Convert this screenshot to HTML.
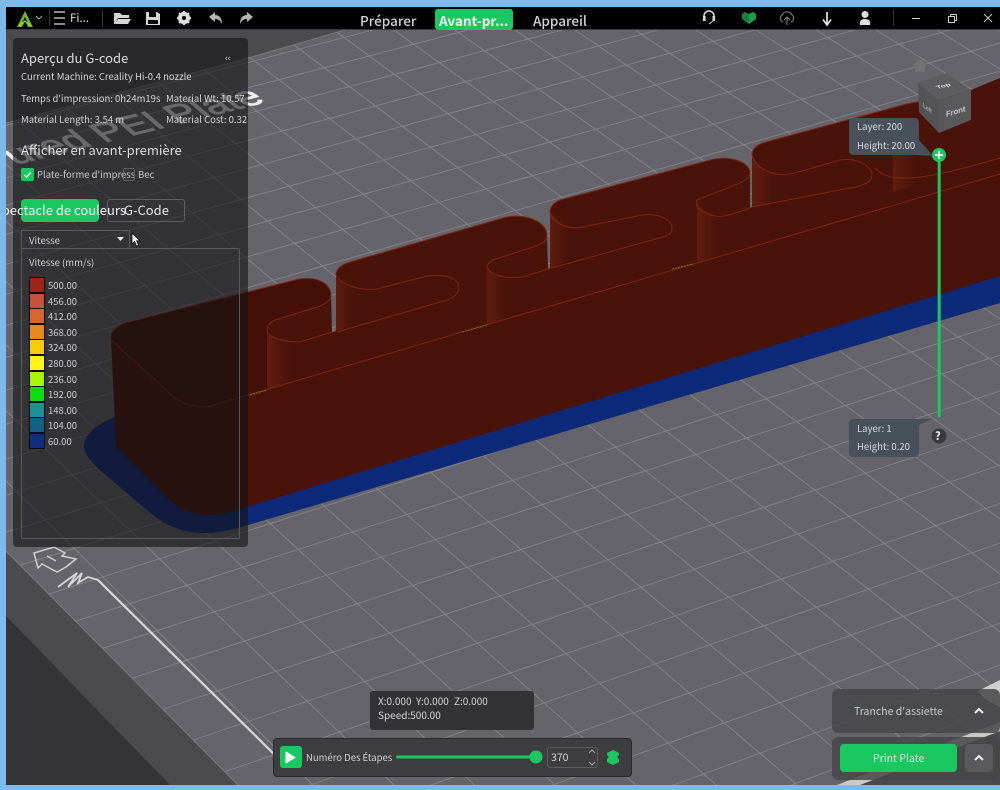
<!DOCTYPE html>
<html><head><meta charset="utf-8"><style>
html,body{margin:0;padding:0;background:#7cb9ec;width:1000px;height:790px;overflow:hidden}
#w{position:relative;width:1000px;height:790px;overflow:hidden;background:#7cb9ec;font-family:"Noto Sans CJK SC","Liberation Sans",sans-serif;font-size:9.5px;color:#d4d4d4}
#scene{position:absolute;left:0;top:0}
.t{position:absolute;white-space:nowrap;line-height:14px}
.a{position:absolute;box-sizing:border-box}
.sw{position:absolute;left:29px;width:16px;height:16px;border:1px solid #0c0c0c;box-sizing:border-box}
.n{position:absolute;left:48px;white-space:nowrap;line-height:14px;color:#cfcfcf}
</style></head><body><div id="w">
<svg id="scene" width="1000" height="790" viewBox="0 0 1000 790">
<defs><clipPath id="v"><rect x="6" y="30" width="994" height="755"/></clipPath>
<clipPath id="pl"><polygon points="6,123 248,58 345,30 1000,30 1000,725 837,785 238,785 6,551"/></clipPath>
<linearGradient id="g"><stop offset="0" stop-color="#601d0f"/><stop offset="1" stop-color="#601d0f" stop-opacity="0"/></linearGradient></defs>
<g clip-path="url(#v)">
<rect x="0" y="30" width="1000" height="760" fill="#65646a"/>
<polygon points="0,30 345,30 248,58 0,125" fill="#4b4a4e"/>
<polygon points="0,545 6,551 238,785 0,785" fill="#4b4a4e"/>
<polygon points="0,612 7,617 170,785 0,785" fill="#343335"/>
<polygon points="837,785 1000,725 1000,785 837,785" fill="#4b4a4e"/>
<g clip-path="url(#pl)" stroke="#858589" stroke-width=".9" fill="none">
<path d="M0,32L8,30M0,55L100,30M0,78.5L191,30M0,102L280,30M0,127L373,30M0,153L468,30M0,179.5L562,30M0,207L658,30M0,236L755,30M0,266L855,30M0,296L950,30M0,327L1000,43M0,359L1000,71M0,392L1000,100M0,426L1000,130M0,461L1000,161M0,497L1000,192M0,534L1000,225M0,571.5L1000,261M0,609.5L1000,291.5M0,645.5L1000,323.5M0,682L1000,355M0,722L1000,391M0,764L1000,428M47,790L1000,465M172,790L1000,503.5M296,790L1000,543M417,790L1000,582M539,790L1000,623M660,790L1000,665M778,790L1000,707M897,790L1000,751"/>
<path d="M0,548L237.6,790M0,475L318,790M0,405L399,790M0,339L480,790M0,276L560.7,790M0,216L641.5,790M0,159L722,790M0,105L803,790M0,52.5L884,790M33,30L965,790M93,30L1000,754M153,30L1000,692M214,30L1000,632M274,30L1000,574M334,30L1000,519M394,30L1000,466.5M455,30L1000,415M515,30L1000,366M575,30L1000,319M635,30L1000,274M696,30L1000,230M756,30L1000,187M816,30L1000,147M876,30L1000,107M937,30L1000,69M997,30L1000,32"/>
</g>
<path d="M6,551L238,785" stroke="#7e7e81" stroke-width="1" fill="none"/>
<path d="M6,123L248,58L345,30" stroke="#78787b" stroke-width="1" fill="none"/>
<text transform="matrix(1.5,-.375,1.05,.9,267,102)" text-anchor="end" font-family="Liberation Sans" font-size="26" fill="#ececec" stroke="#ececec" stroke-width=".7">ured PEI Plate</text>
<path d="M34,553L54,547L65,553L62,556L76,559L66,567L57,572L42,564L38,568ZM47,556L56,561" fill="none" stroke="#cfcfcf" stroke-width="1.5"/>
<path d="M58,587L77,573L68,587L82,573L78,583L88,577L98,580" fill="none" stroke="#d5d5d5" stroke-width="1.8"/>
<path d="M98,580L283,763" stroke="#d8d8d8" stroke-width="2.2"/>
<polygon points="837,785 1000,722 1000,731 860,785" fill="#c9c9c9"/>
<polygon points="978,691 1000,680 1000,707 990,702 984,698" fill="#cfcfcf"/>
<path d="M115,417C95,425 84,435 84,447C85,455 92,463 100,470L147,510C165,527 185,533 205,533C225,533 240,527 255,523L1000,303L1000,276L115,417Z" fill="#0d2a7a"/>
<path d="M111,338C111,330 118,326 125,323L295,280C315,275 331,283 331,295L332,332L336,331L336,275C336,268 343,264 350,262L503,218C525,212 547,222 547,235L548,269L550,268L550,212C550,206 555,202 560,200L710,160C730,155 750,162 750,173L750,208L752,207L752,155C752,148 758,144 766,142L903,105C915,102 925,100 935,100L971,90L1000,78L1000,276L247,507C235,511 225,515 207,515C197,515 187,512 177,507L116,447Z" fill="#4a1309"/>
<path d="M111,338C111,330 118,326 125,323L295,280C315,275 331,283 331,295C331,302 322,305 317,307L275,320C270,322 267,326 267,330L267,389L207,407C197,407 185,405 175,398Z" fill="#430f07"/>
<path d="M267,330C270,336 276,340 290,340L290,382L267,389Z" fill="url(#g)"/>
<path d="M336,278C340,282 344,284 350,285L350,327L336,331Z" fill="url(#g)"/>
<path d="M487,267C490,272 495,276 505,277L505,320L487,325Z" fill="url(#g)"/>
<path d="M550,212C555,218 560,222 568,225L568,260L550,268Z" fill="url(#g)"/>
<path d="M697,200C700,208 705,212 718,216L718,257L697,263Z" fill="url(#g)"/>
<path d="M752,155C756,163 762,168 772,172L772,205L752,207Z" fill="url(#g)"/>
<path d="M893,150L915,145L915,186L893,192Z" fill="url(#g)"/>
<g fill="none" stroke="#7f2713" stroke-width="1">
<path d="M111,338C111,330 118,326 125,323L295,280C315,275 331,283 331,295C331,302 322,305 317,307L275,320C270,322 267,326 267,330C267,336 280,342 300,342L332,332"/>
<path d="M336,275C336,268 343,264 350,262L503,218C525,212 547,222 547,235C547,242 540,245 533,247L493,260C489,262 487,264 487,267C490,275 505,279 523,277L548,269"/>
<path d="M336,275C340,283 355,291 377,289L423,277C440,273 459,276 459,288C459,294 453,298 447,300L337,332"/>
<path d="M550,212C552,222 565,230 583,227L637,216C655,212 672,218 672,228C672,233 668,236 663,237L548,269"/>
<path d="M750,173C750,178 745,181 735,185L697,200C694,206 700,212 715,216C725,218 740,211 750,208"/>
<path d="M710,160C730,155 750,162 750,173M550,212C550,206 555,202 560,200L710,160"/>
<path d="M752,155C756,170 775,178 795,173L840,160C860,157 872,168 872,175C872,182 862,186 855,187L752,207"/>
<path d="M752,155C752,148 758,144 766,142L903,105C915,102 925,100 935,100"/>
<path d="M875,168C890,185 925,180 1000,158"/>
<path d="M111,340L175,398C185,405 197,407 207,407L1000,174"/>
</g>
<path d="M250,395L267,390M462,332L487,325M672,269L693,264" stroke="#6e8018" stroke-width="1" stroke-dasharray="2 1"/>
<path d="M920,59L927,65H925V72H915V65H913Z" fill="#737377"/>
<polygon points="918,83 947,73 971,90 939,100" fill="#5d5d60"/>
<polygon points="918,83 939,100 939,133 919,112" fill="#545457"/>
<polygon points="939,100 971,90 971,120 939,133" fill="#59595c"/>
<text transform="matrix(.95,-.25,.5,.5,938,89)" font-family="Liberation Sans" font-weight="bold" font-size="8" fill="#ddd">Top</text>
<text transform="matrix(.75,.6,0,1,923,107)" font-family="Liberation Sans" font-size="7" fill="#bbb">Left</text>
<text transform="matrix(.95,-.28,0,1,946,117)" font-family="Liberation Sans" font-weight="bold" font-size="8" fill="#ccc">Front</text>
<rect x="937.7" y="155" width="3" height="262" fill="#19c860"/>
<polygon points="919,140 933,156 915,155" fill="#48505a"/>
<rect x="849" y="118" width="70" height="37" rx="4" fill="#48505a"/>
<polygon points="919,425 932,419 910,419" fill="#48505a"/>
<rect x="849" y="419" width="70" height="38" rx="4" fill="#48505a"/>
<circle cx="939" cy="155" r="7" fill="#19c860"/>
<path d="M935,155H943M939,151V159" stroke="#fff" stroke-width="1.8"/>
<circle cx="939" cy="436" r="7.5" fill="#3a3a3c"/>
</g>
</svg>
<div class="a" style="left:13px;top:38px;width:235px;height:509px;background:rgba(18,18,20,.6);border-radius:4px"></div>
<div class="t" style="left:21px;top:50px;font-size:13px;line-height:16px;color:#dcdcdc">Aperçu du G-code</div>
<div class="t" style="left:225px;top:51px;font-size:9px;color:#ccc">‹‹</div>
<div class="t" style="left:21px;top:69px">Current Machine: Creality Hi-0.4 nozzle</div>
<div class="t" style="left:21px;top:91px">Temps d'impression: 0h24m19s</div>
<div class="t" style="left:166px;top:91px;width:81px;overflow:hidden">Material Wt: 10.57</div>
<div class="t" style="left:21px;top:112px">Material Length: 3.54 m</div>
<div class="t" style="left:166px;top:112px;width:82px;overflow:hidden">Material Cost: 0.32</div>
<div class="t" style="left:21px;top:142px;font-size:13px;line-height:16px;color:#dcdcdc">Afficher en avant-première</div>
<svg class="a" style="left:21px;top:168px" width="13" height="13"><rect width="13" height="13" rx="2" fill="#19c860"/><path d="M3.5,6.8L5.6,9L9.6,4.5" fill="none" stroke="#fff" stroke-width="1.4"/></svg>
<div class="t" style="left:37px;top:167px;color:#c9c9c9">Plate-forme d'impress</div>
<div class="a" style="left:123px;top:168px;width:12px;height:13px;border:1px solid #5f5f5f;border-radius:2px"></div>
<div class="t" style="left:138px;top:167px;color:#c9c9c9">Bec</div>
<div class="a" style="left:21px;top:199px;width:78px;height:23px;background:#19c860;border-radius:4px"></div>
<div class="a" style="left:107px;top:199px;width:78px;height:23px;border:1px solid #5f5f5f;border-radius:3px"></div>
<div class="a" style="left:6px;top:202px;width:180px;height:16px;overflow:hidden">
<div class="t" style="left:-12px;top:0;font-size:13px;line-height:16px;color:#f2f2f2">Spectacle de couleurs</div>
<div class="t" style="left:118px;top:0;font-size:13px;line-height:16px;color:#e6e6e6">G-Code</div></div>
<div class="a" style="left:21px;top:230px;width:109px;height:19px;border:1px solid #5a5a5a;border-bottom:0"></div>
<div class="t" style="left:29px;top:233px;color:#d0d0d0">Vitesse</div>
<svg class="a" style="left:117px;top:237px" width="7" height="5"><polygon points="0,0 7,0 3.5,4" fill="#eee"/></svg>
<svg class="a" style="left:131px;top:232px" width="11" height="15"><path d="M1,1V12L3.5,9.5L5.5,14L7.5,13L5.6,8.8H9Z" fill="#f4f4f4" stroke="#111" stroke-width=".8"/></svg>
<div class="a" style="left:21px;top:248px;width:219px;height:291px;border:1px solid #5a5a5a;border-radius:2px"></div>
<div class="t" style="left:29px;top:255px;color:#cfcfcf">Vitesse (mm/s)</div>
<div class="sw" style="top:277px;background:#9b2415"></div><div class="n" style="top:278px">500.00</div>
<div class="sw" style="top:293px;background:#c8503c"></div><div class="n" style="top:294px">456.00</div>
<div class="sw" style="top:308px;background:#d6662e"></div><div class="n" style="top:309px">412.00</div>
<div class="sw" style="top:324px;background:#e68a20"></div><div class="n" style="top:325px">368.00</div>
<div class="sw" style="top:339px;background:#f5cc05"></div><div class="n" style="top:340px">324.00</div>
<div class="sw" style="top:355px;background:#fff515"></div><div class="n" style="top:356px">280.00</div>
<div class="sw" style="top:371px;background:#a9f500"></div><div class="n" style="top:372px">236.00</div>
<div class="sw" style="top:386px;background:#0fdc0f"></div><div class="n" style="top:387px">192.00</div>
<div class="sw" style="top:402px;background:#1f8f99"></div><div class="n" style="top:403px">148.00</div>
<div class="sw" style="top:417px;background:#126088"></div><div class="n" style="top:418px">104.00</div>
<div class="sw" style="top:433px;background:#0e2e82"></div><div class="n" style="top:434px">60.00</div>
<div class="a" style="left:6px;top:7px;width:994px;height:23px;background:#000;border-bottom:1px solid #3a3a3c"></div>
<svg class="a" style="left:0;top:0" width="1000" height="32" fill="none">
<path d="M25,11L33,27H28L25,21L22,27H17Z" fill="#6fb52c"/><path d="M25,17L28,23H22Z" fill="#111"/><path d="M19,26L25,21L31,26" stroke="#a6d83a" stroke-width="1.2"/>
<path d="M36,16L39,19L42,16" stroke="#aaa" stroke-width="1"/>
<path d="M49.5,10V26M102.5,10V26M893.5,10V26" stroke="#333"/>
<path d="M54,12H65M54,18H65M54,24H65" stroke="#ddd" stroke-width="1.2"/>
<path d="M114,13H120L122,15H129V18H118L115,24H114Z" fill="#d5d5d5"/><path d="M118,19H131L128,24H115Z" fill="#d5d5d5"/>
<path d="M146,12H157L160,14V25H146Z" fill="#d5d5d5"/><rect x="149" y="12" width="7" height="5" fill="#000"/><rect x="148" y="20" width="10" height="4" fill="#000"/>
<circle cx="184" cy="18" r="4.5" stroke="#ddd" stroke-width="3.2"/><path d="M184,11V25M177,18H191M179,13L189,23M189,13L179,23" stroke="#ddd" stroke-width="2"/><circle cx="184" cy="18" r="2" fill="#000"/>
<path d="M209,17L215,12V15C220,15 222,19 222,24C220,20 218,19 215,19V22Z" fill="#b5b5b5"/>
<path d="M253,17L247,12V15C242,15 240,19 240,24C242,20 244,19 247,19V22Z" fill="#b5b5b5"/>
<path d="M704,19V16A5,5 0 0 1 714,16V19" stroke="#ddd" stroke-width="1.5"/><rect x="703" y="16" width="2.6" height="5" fill="#ddd"/><rect x="712.5" y="16" width="2.6" height="5" fill="#ddd"/><path d="M713,21L709,24" stroke="#ddd"/>
<path d="M742,14L745,12L749,14L753,12L756,14V19L749,24L742,19Z" fill="#15803f"/><path d="M749,14L753,12L756,14V19L749,24Z" fill="#1a9e4e"/>
<path d="M783,22A4,4 0 0 1 782,15A5.500,5.500 0 0 1 792,15A4,4 0 0 1 791,22M787,25V17M784,20L787,17L790,20" stroke="#7d7d7d" stroke-width="1.1"/>
<path d="M827,12V24M823,19.500L827,25L831,19.500" stroke="#ddd" stroke-width="1.8"/>
<circle cx="865" cy="14.500" r="3.500" fill="#ddd"/><path d="M860,25C859,20 862,19 865,19C868,19 871,20 870,25Z" fill="#ddd"/>
<path d="M912,18.500H920" stroke="#ccc"/><rect x="948.500" y="16.500" width="6" height="6" stroke="#ccc"/><path d="M950.500,16.500V14.500H956.500V20.500H954.500" stroke="#ccc"/>
<path d="M984,14L992,22M992,14L984,22" stroke="#ccc"/>
</svg>
<div class="t" style="left:70px;top:11px;font-size:11.5px;color:#ddd">Fi...</div>
<div class="t" style="left:360px;top:12px;font-size:13.5px;line-height:16px;font-weight:500;color:#cfd4da">Préparer</div>
<div class="a" style="left:435px;top:9px;width:78px;height:21px;background:#19c860;border-radius:3px"></div>
<div class="t" style="left:439px;top:12px;font-size:13.5px;line-height:16px;font-weight:700;color:#f4f4f4">Avant-pr...</div>
<div class="t" style="left:533px;top:12px;font-size:13.5px;line-height:16px;font-weight:500;color:#cfd4da">Appareil</div>
<div class="t" style="left:857px;top:119px;color:#d6dadd">Layer: 200</div>
<div class="t" style="left:857px;top:138px;color:#d6dadd">Height: 20.00</div>
<div class="t" style="left:857px;top:421px;color:#d6dadd">Layer: 1</div>
<div class="t" style="left:857px;top:439px;color:#d6dadd">Height: 0.20</div>
<div class="t" style="left:935px;top:429px;font-size:11px;font-weight:700;color:#fff">?</div>
<div class="a" style="left:370px;top:691px;width:164px;height:39px;background:#333335;border-radius:3px"></div>
<div class="t" style="left:378px;top:694px;font-size:10px;color:#d6d6d6">X:0.000</div>
<div class="t" style="left:416px;top:694px;font-size:10px;color:#d6d6d6">Y:0.000</div>
<div class="t" style="left:454px;top:694px;font-size:10px;color:#d6d6d6">Z:0.000</div>
<div class="t" style="left:378px;top:708px;font-size:10px;color:#d6d6d6">Speed:500.00</div>
<div class="a" style="left:273px;top:738px;width:359px;height:39px;background:#3e3e40;border:1px solid #2a2a2b;border-radius:4px"></div>
<div class="a" style="left:280px;top:746px;width:22px;height:22px;background:#19c860;border-radius:3px"></div>
<svg class="a" style="left:273px;top:738px" width="359" height="39" fill="none">
<path d="M13,14L22,19.500L13,25Z" fill="#fff" stroke="#fff" stroke-linejoin="round"/>
<rect x="123" y="17.500" width="140" height="3" rx="1.500" fill="#19c860"/><circle cx="263" cy="19" r="6.500" fill="#19c860"/>
<rect x="274.500" y="9.500" width="50" height="20" rx="3" stroke="#5c5c5e"/>
<path d="M316,15L319,12L322,15" stroke="#aaa"/><path d="M316,24L319,27L322,24" stroke="#aaa"/>
<path d="M334,15L340,12L346,15V17L344,19L346,21V24L340,27L334,24V21L336,19L334,17Z" fill="#19c860"/>
</svg>
<div class="t" style="left:306px;top:750px;color:#cfcfcf">Numéro Des Étapes</div>
<div class="t" style="left:551px;top:751px;font-size:10.500px;color:#d8d8d8">370</div>
<div class="a" style="left:832px;top:689px;width:168px;height:44px;background:rgba(70,70,72,.85);border-radius:6px"></div>
<div class="a" style="left:832px;top:737px;width:168px;height:43px;background:rgba(70,70,72,.85);border-radius:6px"></div>
<div class="t" style="left:854px;top:705px;font-size:10.500px;color:#c4ccd0">Tranche d'assiette</div>
<div class="a" style="left:840px;top:744px;width:117px;height:28px;background:#19c860;border-radius:4px"></div>
<div class="t" style="left:873px;top:752px;font-size:10.500px;color:#d6ead9">Print Plate</div>
<div class="a" style="left:965px;top:744px;width:28px;height:28px;background:#59585b;border-radius:4px"></div>
<svg class="a" style="left:970px;top:700px" width="20" height="70" fill="none"><path d="M5,13L9,9L13,13" stroke="#eee" stroke-width="2"/><path d="M5,60L9,56L13,60" stroke="#eee" stroke-width="2"/></svg>
<div class="a" style="left:0;top:0;width:6px;height:790px;background:#7cb9ec"></div>
<div class="a" style="left:0;top:785px;width:1000px;height:5px;background:#7cb9ec"></div>
</div></body></html>
